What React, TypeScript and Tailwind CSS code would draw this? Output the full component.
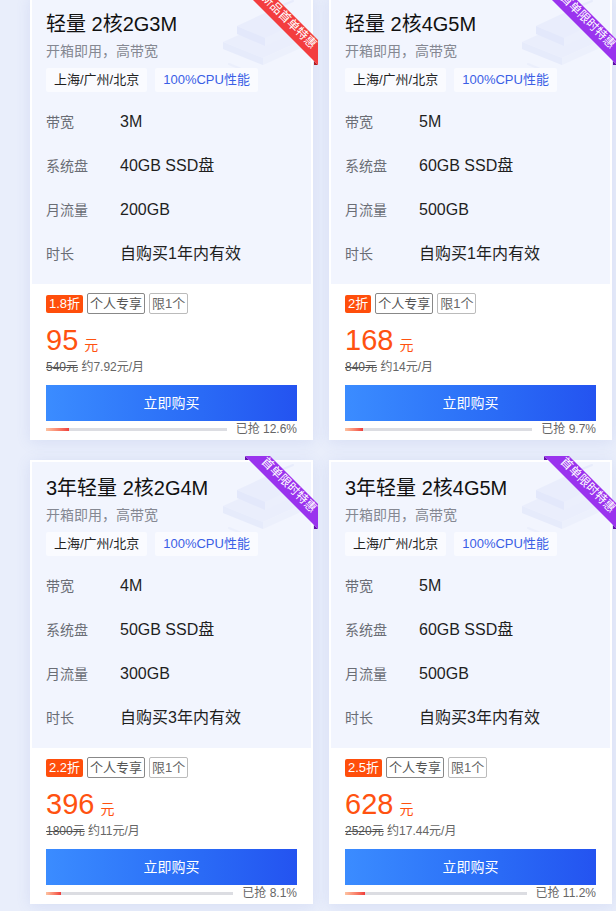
import React from 'react';

type Plan = {
  title: string;
  bandwidth: string;
  disk: string;
  traffic: string;
  duration: string;
  discount: string;
  price: string;
  original: string;
  monthly: string;
  sold: number;
  ribbon: string;
  ribbonColor: 'red' | 'purple';
};

const plans: Plan[] = [
  {
    title: '轻量 2核2G3M',
    bandwidth: '3M',
    disk: '40GB SSD盘',
    traffic: '200GB',
    duration: '自购买1年内有效',
    discount: '1.8折',
    price: '95',
    original: '540元',
    monthly: '约7.92元/月',
    sold: 12.6,
    ribbon: '新品首单特惠',
    ribbonColor: 'red',
  },
  {
    title: '轻量 2核4G5M',
    bandwidth: '5M',
    disk: '60GB SSD盘',
    traffic: '500GB',
    duration: '自购买1年内有效',
    discount: '2折',
    price: '168',
    original: '840元',
    monthly: '约14元/月',
    sold: 9.7,
    ribbon: '首单限时特惠',
    ribbonColor: 'purple',
  },
  {
    title: '3年轻量 2核2G4M',
    bandwidth: '4M',
    disk: '50GB SSD盘',
    traffic: '300GB',
    duration: '自购买3年内有效',
    discount: '2.2折',
    price: '396',
    original: '1800元',
    monthly: '约11元/月',
    sold: 8.1,
    ribbon: '首单限时特惠',
    ribbonColor: 'purple',
  },
  {
    title: '3年轻量 2核4G5M',
    bandwidth: '5M',
    disk: '60GB SSD盘',
    traffic: '500GB',
    duration: '自购买3年内有效',
    discount: '2.5折',
    price: '628',
    original: '2520元',
    monthly: '约17.44元/月',
    sold: 11.2,
    ribbon: '首单限时特惠',
    ribbonColor: 'purple',
  },
];

// Corner ribbon folded over the top-right edge of the card
function Ribbon({ text, color }: { text: string; color: 'red' | 'purple' }) {
  const band = color === 'red' ? '#f33d3f' : '#9a33ee';
  const fold = color === 'red' ? '#b01d22' : '#5f0fa6';
  return (
    <div className="pointer-events-none absolute -top-1 right-[-5px] z-10 h-[73px] w-[73px]">
      <svg width="73" height="73" viewBox="0 0 73 73" className="absolute left-0 top-0">
        <polygon points="0,0 0,4 4,4" fill={fold} />
        <polygon points="73,73 69,73 69,69" fill={fold} />
        <polygon points="0,0 25,0 73,48 73,73" fill={band} />
      </svg>
      <div className="absolute left-[4px] top-[20px] h-[18px] w-[80px] rotate-45 whitespace-nowrap text-center text-[12px] leading-[18px] text-white">
        {text}
      </div>
    </div>
  );
}

// Faint isometric illustration in the top-right of the spec panel
function Decoration() {
  return (
    <svg
      width="96"
      height="78"
      viewBox="0 0 96 78"
      className="pointer-events-none absolute right-0 top-0 opacity-50"
    >
      <polygon points="8,44 48,26 88,42 48,60" fill="#e4e9fc" />
      <polygon points="8,44 8,51 48,67 48,60" fill="#dbe2fa" />
      <polygon points="48,60 88,42 88,49 48,67" fill="#e8ecfc" />
      <polygon points="22,28 52,14 80,26 50,40" fill="#e1e7fb" />
      <polygon points="22,28 22,36 50,48 50,40" fill="#d6ddf9" />
      <polygon points="50,40 80,26 80,34 50,48" fill="#e6eafc" />
      <line x1="60" y1="22" x2="70" y2="17" stroke="#f5f7ff" strokeWidth="2" strokeLinecap="round" />
      <line x1="66" y1="8" x2="78" y2="3" stroke="#dfe5fb" strokeWidth="2" strokeLinecap="round" />
      <line x1="14" y1="66" x2="26" y2="71" stroke="#e6ebfc" strokeWidth="2" strokeLinecap="round" />
    </svg>
  );
}

function SpecRow({ label, value }: { label: string; value: string }) {
  return (
    <div className="flex h-11 items-center">
      <span className="w-[74px] text-[14px] text-[#6a6d75]">{label}</span>
      <span className="text-[16px] text-[#1f1f1f]">{value}</span>
    </div>
  );
}

function PlanCard({ plan }: { plan: Plan }) {
  return (
    <div className="relative w-[283px] bg-white p-[2px] shadow-[0_2px_14px_rgba(80,110,200,0.12)]">
      <Ribbon text={plan.ribbon} color={plan.ribbonColor} />

      {/* Spec panel */}
      <div className="relative bg-[#f2f5fe] px-[14px] pb-2 pt-3">
        <Decoration />
        <div className="relative">
          <h3 className="text-[20px] leading-[28px] text-[#111]">{plan.title}</h3>
          <p className="mt-[3px] text-[14px] leading-5 text-[#858892]">开箱即用，高带宽</p>
          <div className="mt-[7px] flex gap-2">
            <span className="h-6 rounded-[2px] bg-[#fafbff] px-2 text-[13px] leading-6 text-[#1f1f1f]">
              上海/广州/北京
            </span>
            <span className="h-6 rounded-[2px] bg-[#fafbff] px-2 text-[13px] leading-6 text-[#3a5fe6]">
              100%CPU性能
            </span>
          </div>
          <div className="mt-2">
            <SpecRow label="带宽" value={plan.bandwidth} />
            <SpecRow label="系统盘" value={plan.disk} />
            <SpecRow label="月流量" value={plan.traffic} />
            <SpecRow label="时长" value={plan.duration} />
          </div>
        </div>
      </div>

      {/* Price & buy */}
      <div className="px-[14px] pb-[1px] pt-[9px]">
        <div className="flex items-center gap-1">
          <span className="h-[18px] rounded-[2px] bg-[#ff4e0b] px-[3px] text-[13px] leading-[18px] text-white">
            {plan.discount}
          </span>
          <span className="h-[21px] rounded-[2px] border border-[#888] px-[2px] text-[13px] leading-[19px] text-[#555]">
            个人专享
          </span>
          <span className="h-[21px] rounded-[2px] border border-[#bbb] px-[2px] text-[13px] leading-[19px] text-[#666]">
            限1个
          </span>
        </div>
        <div className="mt-2 flex h-9 items-baseline text-[#ff5210]">
          <span className="text-[29px] leading-9">{plan.price}</span>
          <span className="ml-1.5 text-[14px]">元</span>
        </div>
        <div className="text-[12px] leading-[18px] text-[#666]">
          <span className="text-[#555] line-through">{plan.original}</span> {plan.monthly}
        </div>
        <button className="mt-[9px] flex h-9 w-full items-center justify-center bg-gradient-to-r from-[#3b8cff] to-[#2453f0] text-[14px] text-white">
          立即购买
        </button>
        <div className="flex h-4 items-center gap-[9px]">
          <div className="h-[3px] flex-1 bg-[#dcdde2]">
            <div
              className="h-full bg-gradient-to-r from-[#fcc3a2] to-[#ef3b3b]"
              style={{ width: `${plan.sold}%` }}
            />
          </div>
          <span className="text-[12px] leading-4 text-[#666]">已抢 {plan.sold}%</span>
        </div>
      </div>
    </div>
  );
}

export default function App() {
  return (
    <div className="h-[911px] w-[616px] overflow-hidden bg-[#e9eefb] font-['Liberation_Sans','Noto_Sans_CJK_SC',sans-serif]">
      <div className="-mt-1 grid grid-cols-[283px_283px] gap-x-4 gap-y-5 pl-[30px]">
        {plans.map((plan) => (
          <PlanCard key={plan.title} plan={plan} />
        ))}
      </div>
    </div>
  );
}
